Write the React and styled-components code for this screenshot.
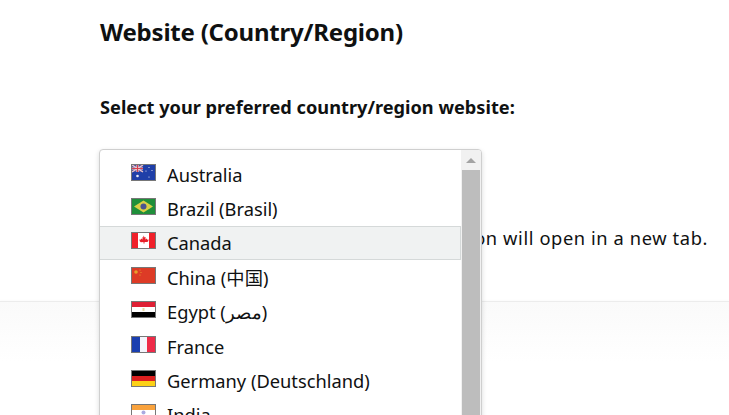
import React from "react";
import styled, { createGlobalStyle } from "styled-components";

const Global = createGlobalStyle`
  html, body {
    margin: 0;
    height: 100%;
    overflow: hidden;
    background: #fff;
  }
  body {
    font-family: "Noto Sans", "Noto Sans CJK SC", sans-serif;
    color: #0f1111;
  }
`;

const Page = styled.div`
  position: relative;
  width: 729px;
  height: 415px;
  overflow: hidden;
`;

const Content = styled.div`
  height: 301px;
  padding: 15px 21px 0 100px;
  box-sizing: border-box;
  display: flex;
  flex-direction: column;
`;

const Title = styled.h1`
  margin: 0;
  font-size: 24px;
  line-height: 34px;
  font-weight: 700;
  letter-spacing: -0.22px;
`;

const Label = styled.div`
  margin-top: 41px;
  font-size: 18.2px;
  line-height: 34px;
  font-weight: 700;
`;

const Note = styled.div`
  margin-top: 102px;
  font-size: 18.3px;
  line-height: 24px;
  letter-spacing: 0.6px;
  text-align: right;
  white-space: nowrap;
`;

const Band = styled.div`
  height: 114px;
  border-top: 1px solid #ececec;
  box-shadow: 0 -1px 2px rgba(0, 0, 0, 0.02);
  background: linear-gradient(#fafafa, #fff 60px);
`;

const Dropdown = styled.div`
  position: absolute;
  left: 99px;
  top: 149px;
  width: 383px;
  height: 290px;
  box-sizing: border-box;
  background: #fff;
  border: 1px solid #cfcfcf;
  border-radius: 4px;
  box-shadow: 0 2px 5px rgba(15, 17, 17, 0.15);
  display: flex;
  overflow: hidden;
`;

const List = styled.ul`
  flex: 1;
  margin: 0;
  padding: 7px 0 0;
  list-style: none;
`;

const Row = styled.li`
  height: 34.4px;
  box-sizing: border-box;
  padding-left: 31px;
  display: flex;
  align-items: center;
  gap: 11px;
  font-size: 18.3px;
  white-space: nowrap;
  ${(p) =>
    p.$active &&
    `
    background: #f0f2f2;
    border-top: 1px solid #d5d9d9;
    border-bottom: 1px solid #d5d9d9;
    border-right: 1px solid #d5d9d9;
  `}
`;

const FlagBox = styled.svg`
  width: 25px;
  height: 17px;
  flex: none;
  margin-top: -4px;
  border: 1px solid #777;
  box-sizing: border-box;
  display: block;
`;

const Scrollbar = styled.div`
  width: 20px;
  flex: none;
  padding-left: 1px;
  box-sizing: border-box;
  background: #f1f1f1;
  border-right: 1px solid #f1f1f1;
  display: flex;
  flex-direction: column;
`;

const ArrowCell = styled.div`
  height: 20px;
  display: flex;
  align-items: center;
  justify-content: center;
`;

const Arrow = styled.div`
  width: 0;
  height: 0;
  border-left: 5px solid transparent;
  border-right: 5px solid transparent;
  border-bottom: 5px solid #a3a3a3;
`;

const Thumb = styled.div`
  flex: 1;
  background: #bdbdbd;
`;

const Australia = () => (
  <FlagBox viewBox="0 0 23 15">
    <rect width="23" height="15" fill="#1f3fa8" />
    <rect width="11" height="7" fill="#4b4f9c" />
    <path d="M0 0l11 7M11 0L0 7" stroke="#e9c6cc" strokeWidth="1.4" />
    <path d="M5.5 0v7M0 3.5h11" stroke="#f4d0d6" strokeWidth="2.2" />
    <path d="M5.5 0v7M0 3.5h11" stroke="#d8414f" strokeWidth="1.1" />
    <circle cx="5.5" cy="11" r="1.3" fill="#e8ecf8" />
    <circle cx="17" cy="2.5" r="0.6" fill="#e8ecf8" />
    <circle cx="14" cy="6" r="0.6" fill="#e8ecf8" />
    <circle cx="20" cy="5.5" r="0.6" fill="#e8ecf8" />
    <circle cx="17" cy="12" r="0.6" fill="#e8ecf8" />
  </FlagBox>
);

const Brazil = () => (
  <FlagBox viewBox="0 0 23 15">
    <rect width="23" height="15" fill="#1f8f3a" />
    <path d="M11.5 1.5L21 7.5l-9.5 6-9.5-6z" fill="#d8cf45" />
    <circle cx="11.5" cy="7.5" r="3" fill="#4a5590" />
  </FlagBox>
);

const Canada = () => (
  <FlagBox viewBox="0 0 23 15">
    <rect width="23" height="15" fill="#fff" />
    <rect width="6" height="15" fill="#f0202a" />
    <rect x="17" width="6" height="15" fill="#f0202a" />
    <path
      d="M11.5 2.5l1.2 2 1-.4-.4 2.4 1.6-1 .4 1.2 1.4-.2-.6 2-1 .6-2.6-.2v1.6h-1V9l-2.6.2-1-.6-.6-2 1.4.2.4-1.2 1.6 1-.4-2.4 1 .4z"
      fill="#e8202a"
    />
  </FlagBox>
);

const China = () => (
  <FlagBox viewBox="0 0 23 15">
    <rect width="23" height="15" fill="#dd3b26" />
    <circle cx="4" cy="4" r="1.8" fill="#e8a02c" />
    <circle cx="8" cy="2" r="0.6" fill="#e8a02c" />
    <circle cx="9" cy="4.5" r="0.6" fill="#e8a02c" />
    <circle cx="8" cy="7" r="0.6" fill="#e8a02c" />
  </FlagBox>
);

const Egypt = () => (
  <FlagBox viewBox="0 0 23 15">
    <rect width="23" height="5" fill="#df2035" />
    <rect y="5" width="23" height="5" fill="#fff" />
    <rect y="10" width="23" height="5" fill="#000" />
    <rect x="10.5" y="6" width="2" height="3" fill="#e8d6a0" />
  </FlagBox>
);

const France = () => (
  <FlagBox viewBox="0 0 23 15">
    <rect width="8" height="15" fill="#1a3fb0" />
    <rect x="8" width="7" height="15" fill="#f4f4fb" />
    <rect x="15" width="8" height="15" fill="#ee2a48" />
  </FlagBox>
);

const Germany = () => (
  <FlagBox viewBox="0 0 23 15">
    <rect width="23" height="5" fill="#000" />
    <rect y="5" width="23" height="5" fill="#dd1f1f" />
    <rect y="10" width="23" height="5" fill="#fcd116" />
  </FlagBox>
);

const India = () => (
  <FlagBox viewBox="0 0 23 15">
    <rect width="23" height="5" fill="#f9a23c" />
    <rect y="5" width="23" height="5" fill="#fff" />
    <rect y="10" width="23" height="5" fill="#2a9a3a" />
    <circle cx="11.5" cy="7.5" r="2" fill="#a9a9e0" />
  </FlagBox>
);

const countries = [
  { name: "Australia", Flag: Australia },
  { name: "Brazil (Brasil)", Flag: Brazil },
  { name: "Canada", Flag: Canada, active: true },
  { name: "China (中国)", Flag: China },
  { name: "Egypt (مصر)", Flag: Egypt },
  { name: "France", Flag: France },
  { name: "Germany (Deutschland)", Flag: Germany },
  { name: "India", Flag: India },
];

export default function App() {
  return (
    <Page>
      <Global />
      <Content>
        <Title>Website (Country/Region)</Title>
        <Label>Select your preferred country/region website:</Label>
        <Note>Your selected country/region will open in a new tab.</Note>
      </Content>
      <Band />
      <Dropdown>
        <List>
          {countries.map(({ name, Flag, active }) => (
            <Row key={name} $active={active}>
              <Flag />
              <span>{name}</span>
            </Row>
          ))}
        </List>
        <Scrollbar>
          <ArrowCell>
            <Arrow />
          </ArrowCell>
          <Thumb />
        </Scrollbar>
      </Dropdown>
    </Page>
  );
}
